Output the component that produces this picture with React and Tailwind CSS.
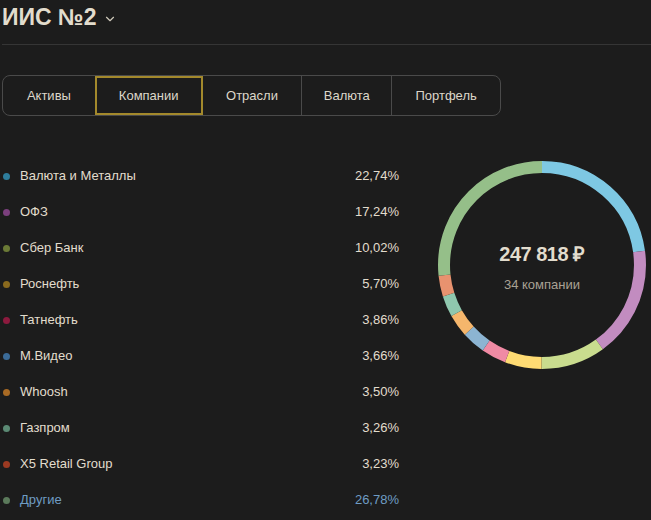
import { ChevronDown } from "lucide-react";

const tabs = ["Активы", "Компании", "Отрасли", "Валюта", "Портфель"];
const tabWidths = ["w-[92px]", "w-[108px]", "w-[99px]", "w-[90px]", "w-[109px]"];

const rows = [
  { name: "Валюта и Металлы", pct: 22.74, dot: "bg-[#2e7d9c]", arc: "#7ec8e3" },
  { name: "ОФЗ", pct: 17.24, dot: "bg-[#7b3f7d]", arc: "#c28cc0" },
  { name: "Сбер Банк", pct: 10.02, dot: "bg-[#6b7a36]", arc: "#c9dc8e" },
  { name: "Роснефть", pct: 5.7, dot: "bg-[#8a6a1e]", arc: "#fedb73" },
  { name: "Татнефть", pct: 3.86, dot: "bg-[#8c1a3e]", arc: "#f08aa4" },
  { name: "М.Видео", pct: 3.66, dot: "bg-[#3b6b98]", arc: "#8cb4d2" },
  { name: "Whoosh", pct: 3.5, dot: "bg-[#a86a24]", arc: "#f5b66c" },
  { name: "Газпром", pct: 3.26, dot: "bg-[#5b8a74]", arc: "#8fc7ae" },
  { name: "X5 Retail Group", pct: 3.23, dot: "bg-[#9c3a22]", arc: "#e8926f" },
  { name: "Другие", pct: 26.78, dot: "bg-[#5b7a5b]", arc: "#95bf89", other: true },
];

const fmt = (n) => n.toFixed(2).replace(".", ",") + "%";

function Donut() {
  const r = 98;
  const c = 2 * Math.PI * r;
  let acc = 0;
  return (
    <div className="relative h-[210px] w-[210px]">
      <svg width="210" height="210" viewBox="0 0 210 210" className="-rotate-90">
        {rows.map((s) => {
          const len = (s.pct / 100) * c;
          const el = (
            <circle
              key={s.name}
              cx="105"
              cy="105"
              r={r}
              fill="none"
              stroke={s.arc}
              strokeWidth="12"
              strokeDasharray={`${len} ${c - len}`}
              strokeDashoffset={-acc}
            />
          );
          acc += len;
          return el;
        })}
      </svg>
      <div className="absolute inset-0 flex flex-col items-center justify-center pt-[4px]">
        <p className="text-[20px] font-bold leading-none tracking-[-0.5px] text-[#e2dccd]">247 818 ₽</p>
        <p className="mt-[14px] text-[13px] leading-none text-[#a9a294]">34 компании</p>
      </div>
    </div>
  );
}

export default function App() {
  return (
    <div className="h-[520px] w-[651px] overflow-hidden bg-[#1c1c1c] font-['Liberation_Sans',Arial,sans-serif]">
      <div className="ml-[2px] flex h-[45px] items-start border-b border-[#353535] pt-[2px]">
        <h1 className="text-[23px] font-bold leading-[30px] text-[#e2dccd]">ИИС №2</h1>
        <ChevronDown className="ml-[6px] mt-[10px] h-[14px] w-[14px] text-[#cfc9bb]" strokeWidth={2} />
      </div>

      <div className="ml-[2px] mt-[30px] flex h-[41px] w-[499px] overflow-hidden rounded-[8px] border border-[#4a4a4a]">
        {tabs.map((t, i) => (
          <div
            key={t}
            className={`flex items-center justify-center text-[13px] text-[#dcd7ca] ${tabWidths[i]} ${
              i === 1
                ? "border-2 border-[#a3892c]"
                : i > 1
                ? "border-l border-[#4a4a4a]"
                : ""
            } ${i === 2 ? "border-l-0" : ""}`}
          >
            {t}
          </div>
        ))}
      </div>

      <div className="mt-[42px] flex">
        <div className="w-[399px]">
          {rows.map((row) => (
            <div key={row.name} className="flex h-[36px] items-center">
              <span className={`ml-[3px] h-[7px] w-[7px] rounded-full ${row.dot}`} />
              <span
                className={`ml-[10px] flex-1 text-[13px] ${row.other ? "text-[#6f9cc4]" : "text-[#e2dccd]"}`}
              >
                {row.name}
              </span>
              <span className={`text-[13px] ${row.other ? "text-[#6f9cc4]" : "text-[#e2dccd]"}`}>
                {fmt(row.pct)}
              </span>
            </div>
          ))}
        </div>
        <div className="ml-[38px] mt-[2px]">
          <Donut />
        </div>
      </div>
    </div>
  );
}
